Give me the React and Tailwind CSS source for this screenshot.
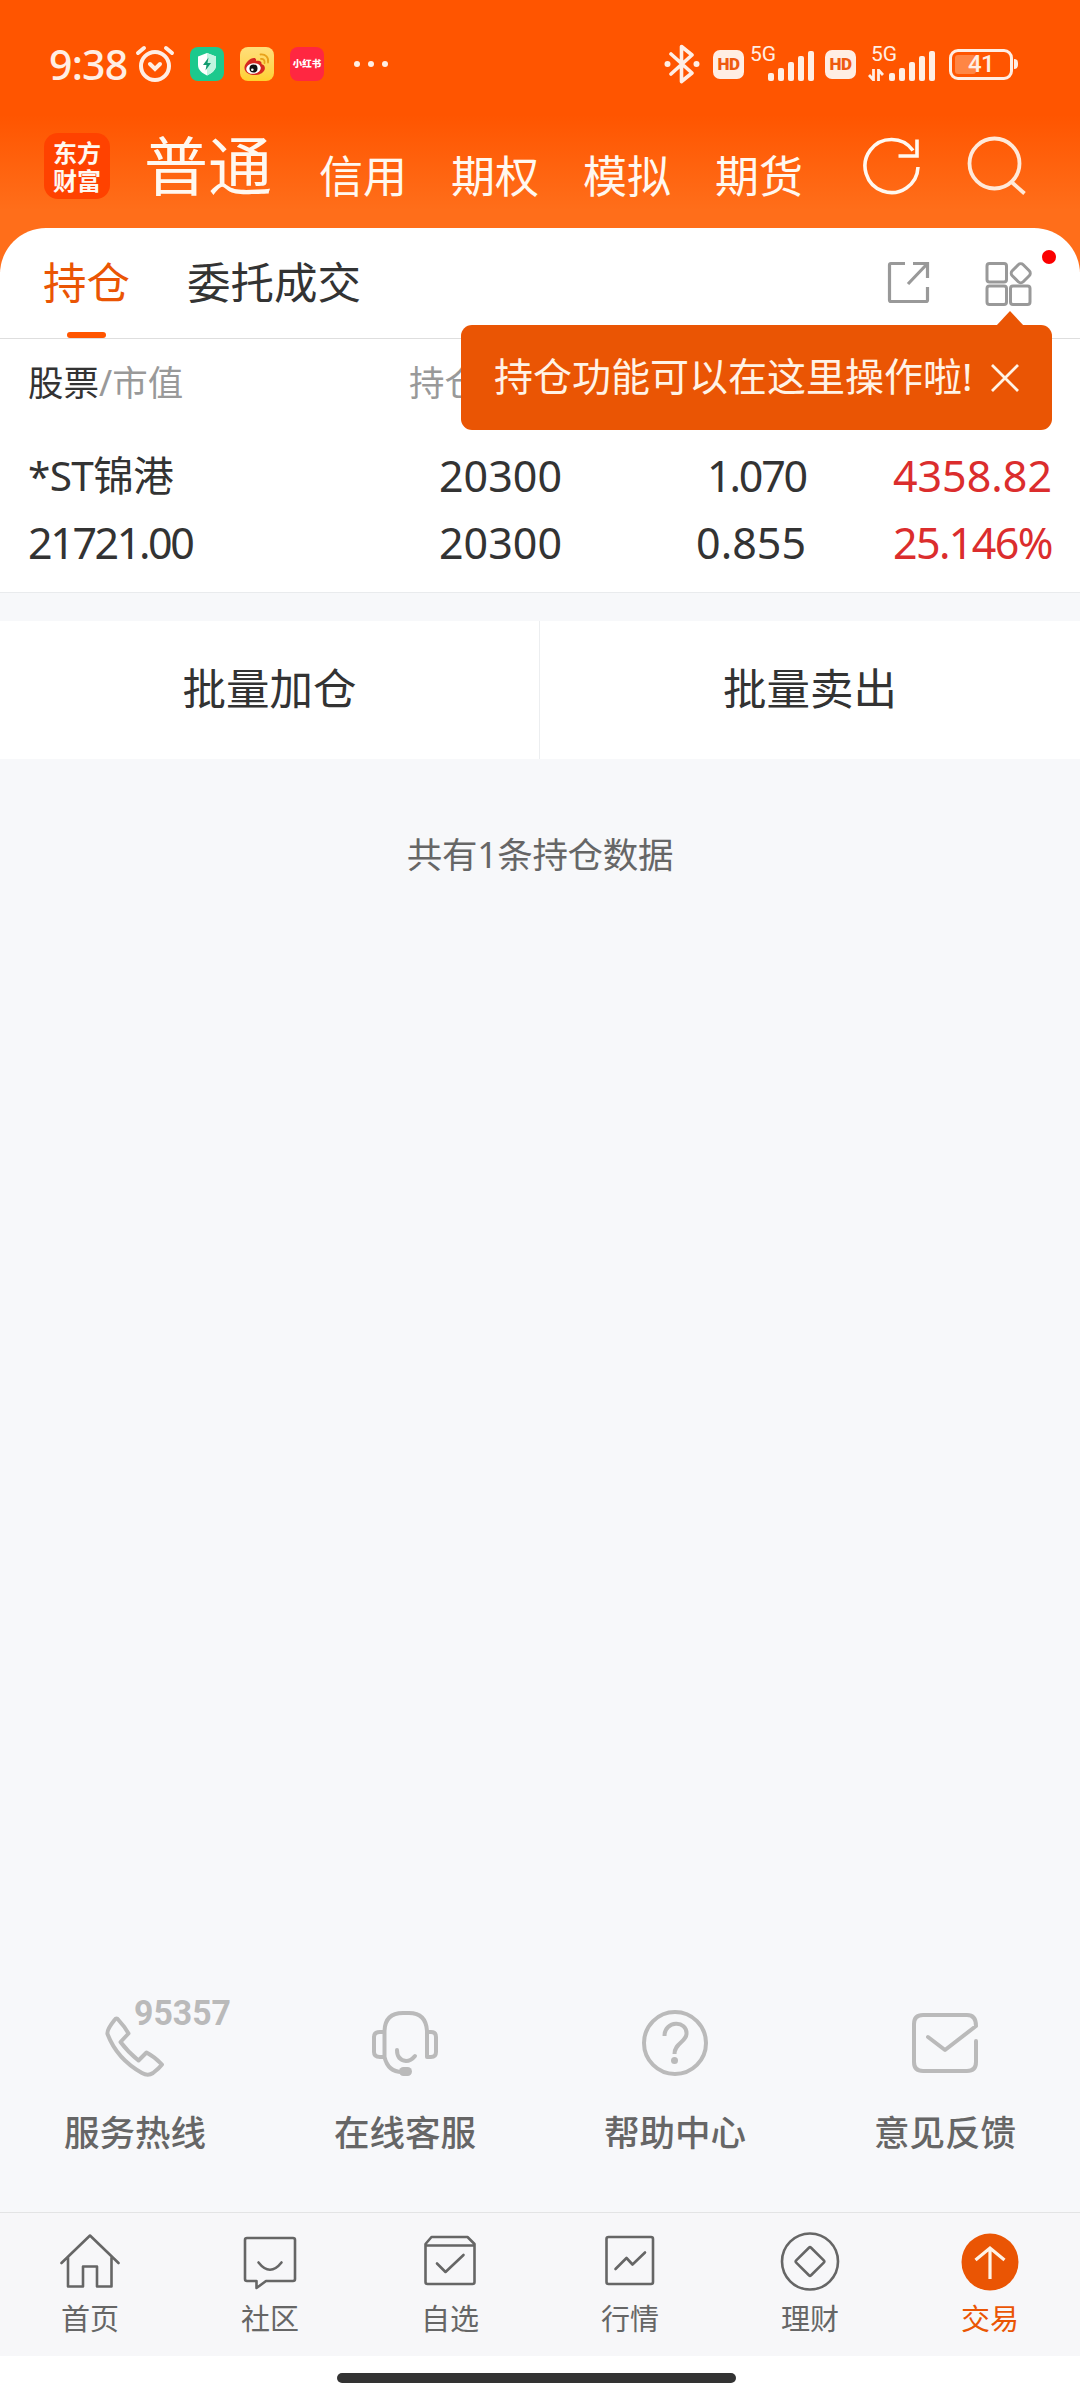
import React from 'react';

const bars = [8, 13, 19, 25, 30];

const SignalBars = () => (
  <div className="flex items-end gap-[3.5px] h-[30px]">
    {bars.map((h) => (
      <div key={h} className="w-[6.5px] rounded-[2px] bg-[#ffeee4]" style={{ height: h }} />
    ))}
  </div>
);

const HdBadge = () => (
  <div className="w-[31px] h-[29px] rounded-[7px] bg-[#ffeee4] flex items-center justify-center text-[#ee5a10] text-[17px] leading-none font-black tracking-tight font-['Roboto',sans-serif]">
    HD
  </div>
);

const StatusBar = () => (
  <div className="h-[128px] pt-[44px] flex items-start text-[#ffeee4]">
    <div className="flex items-center h-10 pl-[49px]">
      <span className="w-[86px] text-[41px] leading-10 font-medium tracking-[-0.8px] whitespace-nowrap">9:38</span>
      <svg width="40" height="38" viewBox="0 0 40 38" fill="none" stroke="currentColor" strokeWidth="4" strokeLinecap="round">
        <circle cx="20" cy="21" r="14" />
        <path d="M3 8l6-5M37 8l-6-5M15 19l5 5 5-5" />
      </svg>
      <div className="ml-[15px] w-[34px] h-[34px] rounded-[8px] bg-[#1cc98d] flex items-center justify-center">
        <svg width="20" height="24" viewBox="0 0 20 24">
          <path d="M10 1l9 3.5v8.5c0 5-4 8-9 10.500c-5-2.500-9-5.500-9-10.500V4.500z" fill="#fff" />
          <path d="M10 1l9 3.500v8.500c0 5-4 8-9 10.500z" fill="#c2f5e0" />
          <path d="M11.500 5.500L6 13h3.500l-1 5.500L14 11h-3.500z" fill="#119b6f" />
        </svg>
      </div>
      <div className="ml-4 w-[34px] h-[34px] rounded-[8px] bg-gradient-to-b from-[#ffdf7a] to-[#ffd02e] flex items-center justify-center">
        <svg width="34" height="34" viewBox="0 0 34 34">
          <path d="M14 11c2 0 2.500 2 2 3 3-1 6 0 5.500 3 3 1 4 3 3 6-2 4-7 5.500-11.500 5-5-.5-9-3.500-8.500-8 .5-4 5.500-9 9.500-9z" fill="#d5281f" />
          <ellipse cx="13.500" cy="21.500" rx="7.300" ry="5.300" fill="#fff" transform="rotate(-8 13.500 21.500)" />
          <circle cx="13.500" cy="21.500" r="4" fill="#111" />
          <circle cx="12.300" cy="22.800" r="1.300" fill="#fff" />
          <path d="M21 12c2.500-.3 4 1.500 3.500 4M20.500 7.500c5-.5 8.500 3 7.500 8" fill="none" stroke="#e8a21a" strokeWidth="1.800" strokeLinecap="round" />
        </svg>
      </div>
      <div className="ml-4 w-[34px] h-[34px] rounded-[8px] bg-[#ff2741] flex items-center justify-center text-white text-[9.5px] leading-none font-black whitespace-nowrap">
        小红书
      </div>
      <div className="ml-[30px] flex gap-2">
        <div className="w-1.5 h-1.5 rounded-full bg-current" />
        <div className="w-1.5 h-1.5 rounded-full bg-current" />
        <div className="w-1.5 h-1.5 rounded-full bg-current" />
      </div>
    </div>

    <div className="ml-auto mr-[62px] flex items-center h-10">
      <svg width="36" height="40" viewBox="0 0 36 40" fill="none" stroke="currentColor" strokeWidth="3.600" strokeLinejoin="round" strokeLinecap="round">
        <path d="M7 10l21 19-10.500 8.500V2.500L28 11 7 30" />
        <circle cx="3.500" cy="20" r="3" fill="currentColor" stroke="none" />
        <circle cx="32.500" cy="20" r="3" fill="currentColor" stroke="none" />
      </svg>
      <div className="ml-[13px]"><HdBadge /></div>
      <div className="ml-1.5 w-[64px] h-[34px] relative flex items-end justify-end">
        <span className="absolute left-0 -top-px text-[21px] leading-4 font-['Roboto',sans-serif]">5G</span>
        <SignalBars />
      </div>
      <div className="ml-[11px]"><HdBadge /></div>
      <div className="ml-[12px] w-[67px] h-[34px] relative flex items-end justify-end">
        <span className="absolute left-[3px] -top-px text-[21px] leading-4 font-['Roboto',sans-serif]">5G</span>
        <svg className="absolute left-0 bottom-0" width="16" height="12" viewBox="0 0 16 12" fill="none" stroke="currentColor" strokeWidth="2.800">
          <path d="M5.500 0v11L1 6M10.500 12V1l4.500 5" />
        </svg>
        <SignalBars />
      </div>
      <div className="ml-[14px] w-[64px] h-[31px] rounded-[9px] border-[3px] border-current p-[3px] relative">
        <div className="h-full w-[21px] rounded-[3px] bg-[#ff8644]" />
        <span className="absolute inset-0 text-center text-[24px] leading-[25px] font-medium font-['Roboto',sans-serif] tracking-tight">41</span>
      </div>
      <div className="ml-px w-1 h-[10px] rounded-r bg-current" />
    </div>
  </div>
);

const markets = ['信用', '期权', '模拟', '期货'];

const Header = () => (
  <div className="h-[100px] flex items-start text-[#fff8f0]">
    <div className="ml-[44px] mt-[5px] w-[66px] h-[66px] rounded-[14px] bg-[#ff4200] flex items-center justify-center text-[24px] leading-[28px] font-bold font-['Noto_Sans_CJK_SC',sans-serif]">
      <p className="w-12 break-all">东方财富</p>
    </div>
    <span className="ml-[34px] mt-[5px] text-[64px] leading-[66px]">普通</span>
    <div className="ml-[47px] mt-[25px] flex gap-11">
      {markets.map((m) => (
        <span key={m} className="text-[44px] leading-[46px]">{m}</span>
      ))}
    </div>
    <svg className="ml-[58px] mt-[8px]" width="60" height="60" viewBox="0 0 60 60" fill="none" stroke="currentColor" strokeWidth="3.600">
      <path d="M57 31A26.500 26.500 0 1 1 52 14.500" />
      <path d="M56 3.500V20H37.500" />
    </svg>
    <svg className="ml-[46px] mt-[7px]" width="62" height="60" viewBox="0 0 62 60" fill="none" stroke="#ffe9d9" strokeWidth="3.800">
      <circle cx="27.500" cy="28.500" r="25" />
      <path d="M44 46.500l13.500 12" />
    </svg>
  </div>
);

const Tooltip = () => (
  <div className="absolute left-[461px] top-[97px] w-[591px] h-[105px] rounded-[11px] bg-[#ea5504] flex items-center text-[#fff3e6]">
    <svg className="absolute right-[28px] -top-[14px]" width="28" height="15" viewBox="0 0 28 15">
      <path d="M0 15L14 0l14 15z" fill="#ea5504" />
    </svg>
    <span className="ml-[33px] mb-[3px] w-[496px] text-[39px] leading-[50px] whitespace-nowrap">持仓功能可以在这里操作啦!</span>
    <svg width="30" height="30" viewBox="0 0 30 30" fill="none" stroke="currentColor" strokeWidth="2.800">
      <path d="M2 2l26 26M28 2L2 28" />
    </svg>
  </div>
);

const Tabs = () => (
  <div className="h-[111px] border-b border-[#dedede] flex items-start">
    <div className="ml-[43px] pt-[31px] flex flex-col items-center text-[#ea5504]">
      <span className="text-[43.5px] leading-[46px]">持仓</span>
      <div className="mt-[27px] w-[39px] h-1.5 rounded-full bg-[#ff5500]" />
    </div>
    <span className="ml-[57px] mt-[31px] text-[43.5px] leading-[46px]">委托成交</span>
    <div className="ml-auto mr-[47px] mt-[33px] flex text-[#999]">
      <svg width="44" height="44" viewBox="0 0 44 44" fill="none" stroke="currentColor" strokeWidth="3.200" strokeLinejoin="round">
        <path d="M18 2.500H4q-1.500 0-1.500 1.500v35q0 1.500 1.500 1.500h35q1.500 0 1.500-1.500V26" />
        <path d="M26 2.500h14.500V17M40.500 2.500L21 23" strokeLinejoin="miter" />
      </svg>
      <svg className="ml-[54px]" width="48" height="46" viewBox="0 0 48 46" fill="none" stroke="currentColor" strokeWidth="3">
        <rect x="2" y="2.500" width="19.500" height="18.500" rx="2.500" />
        <rect x="2" y="25" width="19.500" height="18.500" rx="2.500" />
        <rect x="25.500" y="25" width="19.500" height="18.500" rx="2.500" />
        <rect x="28" y="4.500" width="15.500" height="15.500" rx="3.500" transform="rotate(45 35.750 12.250)" />
      </svg>
    </div>
    <div className="absolute right-6 top-[22px] w-[14px] h-[14px] rounded-full bg-[#fb0000]" />
  </div>
);

const Holdings = () => (
  <div className="h-[254px] bg-white border-b border-[#e9ebed] pl-[28px] pr-[28px]">
    <div className="pt-[20px] flex text-[35.5px] leading-[46px]">
      <span className="w-[381px]">
        股票<span className="text-[#999]">/市值</span>
      </span>
      <span className="text-[#999]">持仓</span>
    </div>
    <div className="mt-[38px] grid grid-cols-[300px_234px_244px_246px] text-right text-[43px] leading-[66.5px]">
      <span className="text-left text-[40.5px] tracking-[-0.6px]">*ST锦港</span>
      <span>20300</span>
      <span className="tracking-[-2.2px]">1.070</span>
      <span className="text-[#db2d2d]">4358.82</span>
      <span className="text-left tracking-[-2.4px]">21721.00</span>
      <span>20300</span>
      <span>0.855</span>
      <span className="text-[#db2d2d] tracking-[-1.6px]">25.146%</span>
    </div>
  </div>
);

const services = [
  {
    label: '服务热线',
    icon: (
      <>
        <path d="M9.500 10Q11.500 7 13.500 10Q20 17 23.500 23.500L15.500 32Q23 42 33.500 50.500L41.500 42.500Q50 47 57 54.500Q54 58.500 48 63Q43 66.500 37 63Q12 49 2.500 24Q1.500 20 9.500 10Z" transform="translate(3)" />
        <text x="32" y="14.500" fontSize="35" fontWeight="700" textLength="97" lengthAdjust="spacingAndGlyphs" fill="currentColor" stroke="none" fontFamily="Roboto, sans-serif">95357</text>
      </>
    ),
  },
  {
    label: '在线客服',
    icon: (
      <>
        <path d="M12.500 47V21Q13 3 31 3H37Q54 3 55 21V47H59Q64 47 64 42V27Q64 22 59 22H55M12.500 22H8Q2 22 2 27V42Q2 47 8 47H12.500Q16 62 30 62" />
        <path d="M25 40Q25 50 34 51Q39 51 43 46" />
        <rect x="27" y="57" width="13" height="9" rx="4.500" fill="currentColor" stroke="none" />
      </>
    ),
  },
  {
    label: '帮助中心',
    icon: (
      <>
        <circle cx="33" cy="33" r="31" />
        <path d="M22.500 26C22.500 10 45.500 10 44.500 24C44 32 32.500 33 32.500 44" strokeLinecap="butt" />
        <circle cx="32.500" cy="50.500" r="3.500" fill="currentColor" stroke="none" />
      </>
    ),
  },
  {
    label: '意见反馈',
    icon: (
      <path d="M64 31V52Q64 61 55 61H11Q2 61 2 52V14Q2 5 11 5H55Q64 5 64 16L33 40L16 27" />
    ),
  },
];

const Services = () => (
  <div className="grid grid-cols-4 text-[#666] h-[202px]">
    {services.map((s) => (
      <div key={s.label} className="flex flex-col items-center">
        <svg className="overflow-visible text-[#bababa]" width="66" height="66" viewBox="0 0 66 66" fill="none" stroke="currentColor" strokeWidth="4" strokeLinecap="round" strokeLinejoin="round">
          {s.icon}
        </svg>
        <span className="mt-[33px] text-[35.5px] leading-[46px] font-medium">{s.label}</span>
      </div>
    ))}
  </div>
);

const navItems = [
  {
    label: '首页',
    icon: <path d="M1.500 31L30 3.500L58.500 31M8 25.500V54.500H23V34.500H37V54.500H51.500V25.500" />,
  },
  {
    label: '社区',
    icon: (
      <>
        <path d="M7 6H53Q55 6 55 8V47Q55 49 53 49H26L16.500 56V49H7Q5 49 5 47V8Q5 6 7 6Z" />
        <path d="M18.500 30.500Q30 45 41.500 30.500" />
      </>
    ),
  },
  {
    label: '自选',
    icon: (
      <>
        <path d="M11.500 5H47.500L54.500 12V50Q54.500 52 52.500 52H7.500Q5.500 52 5.500 50V12ZM5.500 13.500H54.500" />
        <path d="M17 31.500L25.500 40L43.500 23" />
      </>
    ),
  },
  {
    label: '行情',
    icon: (
      <>
        <rect x="6.500" y="5" width="46.500" height="47" rx="2" />
        <path d="M15.500 37L26.500 26L32.500 32.500L45 20.500" />
      </>
    ),
  },
  {
    label: '理财',
    icon: (
      <>
        <circle cx="30" cy="29.500" r="28" />
        <rect x="19.500" y="19" width="21" height="21" rx="1.500" transform="rotate(45 30 29.500)" />
      </>
    ),
  },
  {
    label: '交易',
    active: true,
    icon: (
      <>
        <circle cx="30" cy="30" r="28.500" fill="currentColor" stroke="none" />
        <path d="M30 47V16.500M15.500 28L30 16L44.500 28" stroke="#fff3e6" strokeWidth="3.200" strokeLinecap="butt" strokeLinejoin="miter" />
      </>
    ),
  },
];

const BottomNav = () => (
  <div className="h-[144px] bg-[#f7f7f9] border-t border-[#e3e4e5] grid grid-cols-6">
    {navItems.map((item) => (
      <div key={item.label} className={`flex flex-col items-center pt-[19px] ${item.active ? 'text-[#ea5504]' : 'text-[#666]'}`}>
        <svg width="60" height="60" viewBox="0 0 60 60" fill="none" stroke="currentColor" strokeWidth="2.600" strokeLinecap="round" strokeLinejoin="round">
          {item.icon}
        </svg>
        <span className="mt-[7px] text-[29px] leading-[40px]">{item.label}</span>
      </div>
    ))}
  </div>
);

const App = () => {
  return (
    <div className="w-[1080px] h-[2400px] flex flex-col overflow-hidden bg-[#f7f8fa] text-[#333] font-['Noto_Sans','Noto_Sans_CJK_SC',sans-serif]">
      <div className="h-[272px] bg-[linear-gradient(180deg,#ff5500_0px,#ff5500_115px,#ff6e1a_210px)]">
        <StatusBar />
        <Header />
      </div>
      {/* card overlaps the orange header with its rounded corners */}
      <div className="relative -mt-11 rounded-t-[46px] bg-white">
        <Tabs />
        <Holdings />
        <Tooltip />
      </div>
      <div className="mt-[28px] h-[138px] bg-white grid grid-cols-2 text-[43.5px]">
        <div className="flex items-center justify-center border-r border-[#eceef0] pb-[2px]">批量加仓</div>
        <div className="flex items-center justify-center pb-[2px]">批量卖出</div>
      </div>
      <p className="mt-[71px] mb-px text-center text-[35.5px] leading-[48px] tracking-[-0.3px] text-[#666]">共有1条持仓数据</p>
      <div className="mt-auto">
        <Services />
        <BottomNav />
        <div className="h-[44px] bg-white flex justify-center pt-[17px] pr-[7px]">
          <div className="w-[399px] h-[10px] rounded-full bg-[#333]" />
        </div>
      </div>
    </div>
  );
};

export default App;
